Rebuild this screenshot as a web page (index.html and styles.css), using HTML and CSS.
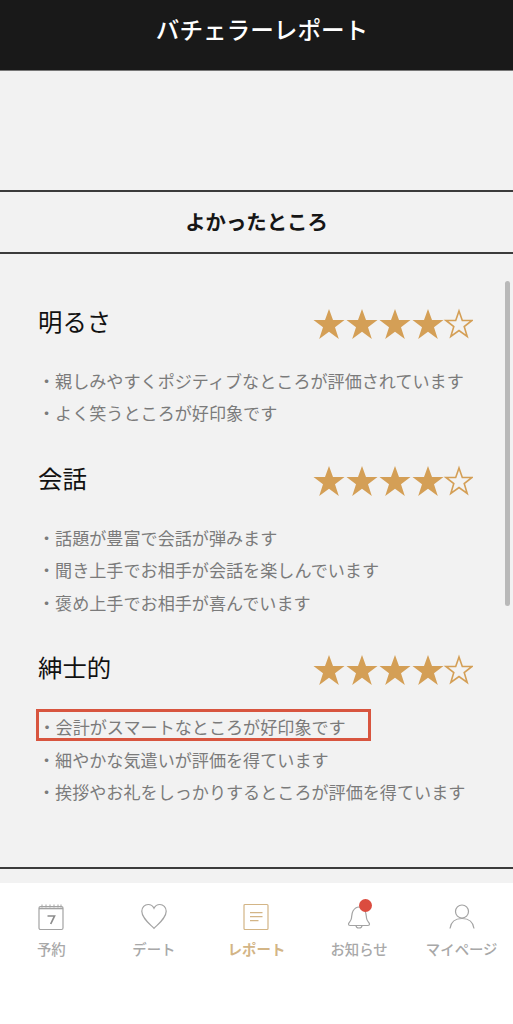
FILE: index.html
```html
<!DOCTYPE html>
<html lang="ja">
<head>
<meta charset="utf-8">
<title>バチェラーレポート</title>
<link rel="stylesheet" href="styles.css">
</head>
<body>
<div class="app">
  <header class="topbar">バチェラーレポート</header>
  <div class="spacer"></div>
  <h2 class="band">よかったところ</h2>
  <main class="content">
    <div class="scrollbar"></div>
    <section class="group first">
      <div class="group-head">
        <h3>明るさ</h3>
        <svg class="stars" viewBox="0 0 160 32"><use href="#s" x="0"/><use href="#s" x="33"/><use href="#s" x="66"/><use href="#s" x="99"/><use href="#e" x="132"/></svg>
      </div>
      <ul>
        <li>・親しみやすくポジティブなところが評価されています</li>
        <li>・よく笑うところが好印象です</li>
      </ul>
    </section>
    <section class="group">
      <div class="group-head">
        <h3>会話</h3>
        <svg class="stars" viewBox="0 0 160 32"><use href="#s" x="0"/><use href="#s" x="33"/><use href="#s" x="66"/><use href="#s" x="99"/><use href="#e" x="132"/></svg>
      </div>
      <ul>
        <li>・話題が豊富で会話が弾みます</li>
        <li>・聞き上手でお相手が会話を楽しんでいます</li>
        <li>・褒め上手でお相手が喜んでいます</li>
      </ul>
    </section>
    <section class="group">
      <div class="group-head">
        <h3>紳士的</h3>
        <svg class="stars" viewBox="0 0 160 32"><use href="#s" x="0"/><use href="#s" x="33"/><use href="#s" x="66"/><use href="#s" x="99"/><use href="#e" x="132"/></svg>
      </div>
      <ul>
        <li class="marked">・会計がスマートなところが好印象です</li>
        <li>・細やかな気遣いが評価を得ています</li>
        <li>・挨拶やお礼をしっかりするところが評価を得ています</li>
      </ul>
    </section>
  </main>
  <div class="gap"></div>
  <nav class="tabs">
    <div class="tab">
      <svg viewBox="0 0 28 28" fill="none" stroke="#a3a3a3" stroke-width="1.2"><rect x="2" y="3.500" width="24" height="23" rx="1.500"/><path d="M2 5.500h24" stroke-width="1.600"/><path d="M5 1.500v3M9 1.500v3M13 1.500v3M17 1.500v3M21 1.500v3M24 1.500v3" stroke-width="1"/><path d="M10.500 13h7l-3.800 8" stroke="#8c8c8c" stroke-width="1.700"/></svg>
      <span>予約</span>
    </div>
    <div class="tab">
      <svg viewBox="0 0 28 28" fill="none" stroke="#a3a3a3" stroke-width="1.200"><path d="M14 25.300C9 20.300 1.800 15 1.800 8.300 1.800 4.300 4.700 1.500 8.200 1.500c2.500 0 4.600 1.400 5.800 3.800 1.200-2.400 3.300-3.800 5.800-3.800 3.500 0 6.400 2.800 6.400 6.800C26.200 15 19 20.300 14 25.300z"/></svg>
      <span>デート</span>
    </div>
    <div class="tab active">
      <svg viewBox="0 0 28 28" fill="none" stroke="#d3b586" stroke-width="1.200"><rect x="2" y="1.500" width="24" height="25" rx="1"/><path d="M8 9.700h12.500M8 13.700h12.500M8 17.700h8.500"/></svg>
      <span>レポート</span>
    </div>
    <div class="tab">
      <div class="bell">
        <svg viewBox="0 0 28 28" fill="none" stroke="#a3a3a3" stroke-width="1.200"><path d="M3.500 21c0-1.500 2.500-2 3-6 .3-2.500.3-5 1.500-7C9.500 5.500 11.500 4 14 4s4.500 1.500 6 4c1.200 2 1.200 4.500 1.500 7 .5 4 3 4.500 3 6 0 .8-.5 1.500-1.500 1.500H5c-1 0-1.500-.7-1.500-1.500z"/><path d="M11 22.500c0 1.500 1.300 2.500 3 2.500s3-1 3-2.500"/></svg>
        <i class="dot"></i>
      </div>
      <span>お知らせ</span>
    </div>
    <div class="tab">
      <svg viewBox="0 0 28 28" fill="none" stroke="#a3a3a3" stroke-width="1.200"><circle cx="14" cy="8.500" r="6.500"/><path d="M2 25.500c.8-6 5-10 12-10s11.200 4 12 10"/></svg>
      <span>マイページ</span>
    </div>
  </nav>
</div>
<svg class="defs" width="0" height="0">
  <defs>
    <polygon id="s" points="16,1 20,12 31.500,12 22,19.200 25.800,31 16,23.800 6.200,31 10,19.200 .5,12 12,12" fill="#d49f56"/>
    <polygon id="e" points="14,3 17.300,12.500 27,12.500 19.200,18.500 22.200,28.500 14,22.500 5.800,28.500 8.800,18.500 1,12.500 10.700,12.500" fill="none" stroke="#d49f56" stroke-width="1.600"/>
  </defs>
</svg>
</body>
</html>
```
FILE: styles.css
```css
* { box-sizing: border-box; }
html, body { margin: 0; padding: 0; }
body {
  width: 513px;
  height: 1024px;
  overflow: hidden;
  background: #fff;
  font-family: "Noto Sans CJK JP", "Noto Sans", sans-serif;
}
.app { display: flex; flex-direction: column; height: 1024px; }
.topbar {
  height: 71px;
  flex: none;
  padding: 12px 0 0 11px;
  background: #191919;
  color: #fff;
  font-size: 23.6px;
  font-weight: 500;
  line-height: 35px;
  text-align: center;
  border-bottom: 1px solid #777;
}
.spacer { height: 119px; flex: none; background: #f2f2f2; }
.band {
  margin: 0;
  height: 64px;
  flex: none;
  background: #f2f2f2;
  border-top: 2px solid #3c3c3c;
  border-bottom: 2px solid #3c3c3c;
  color: #161616;
  font-size: 20.4px;
  font-weight: 700;
  line-height: 58px;
  text-align: center;
}
.content {
  position: relative;
  height: 615px;
  flex: none;
  background: #f2f2f2;
  border-bottom: 2px solid #3c3c3c;
  padding: 50px 41px 0 38px;
}
.scrollbar {
  position: absolute;
  left: 505px;
  top: 27px;
  width: 5px;
  height: 325px;
  border-radius: 3px;
  background: #b9b9b9;
}
.group { margin-top: 31.2px; }
.group.first { margin-top: 0; }
.group-head {
  display: flex;
  justify-content: space-between;
  align-items: center;
  height: 40px;
}
.group-head h3 {
  margin: 0 0 6px;
  color: #111;
  font-size: 24.4px;
  font-weight: 400;
  line-height: 36px;
}
.stars { width: 160px; height: 32px; margin-right: -1px; }
ul { list-style: none; margin: 21px 0 0; padding: 0; }
li {
  height: 32.4px;
  color: #7b7b7b;
  font-size: 17.1px;
  line-height: 32px;
  white-space: nowrap;
}
li.marked {
  width: 335px;
  height: 32px;
  margin: -2px 0 2.400px -2px;
  padding-left: 0;
  border: 3px solid #d8553f;
  line-height: 30px;
  text-indent: -0.500px;
}
.gap { height: 14px; flex: none; background: #f2f2f2; }
.tabs {
  flex: 1;
  display: grid;
  grid-template-columns: repeat(5, 1fr);
  padding: 20px 0 0;
  background: #fff;
}
.tab {
  display: flex;
  flex-direction: column;
  align-items: center;
  gap: 8px;
  color: #a8a8a8;
  font-size: 14.4px;
  font-weight: 500;
  line-height: 20px;
  white-space: nowrap;
}
.tab svg { display: block; width: 28px; height: 28px; }
.tab.active { color: #d3b586; font-weight: 700; }
.bell { position: relative; width: 28px; height: 28px; }
.dot {
  position: absolute;
  left: 14px;
  top: -4.500px;
  width: 13px;
  height: 13px;
  border-radius: 50%;
  background: #db4c3f;
}
.defs { position: absolute; }
```
